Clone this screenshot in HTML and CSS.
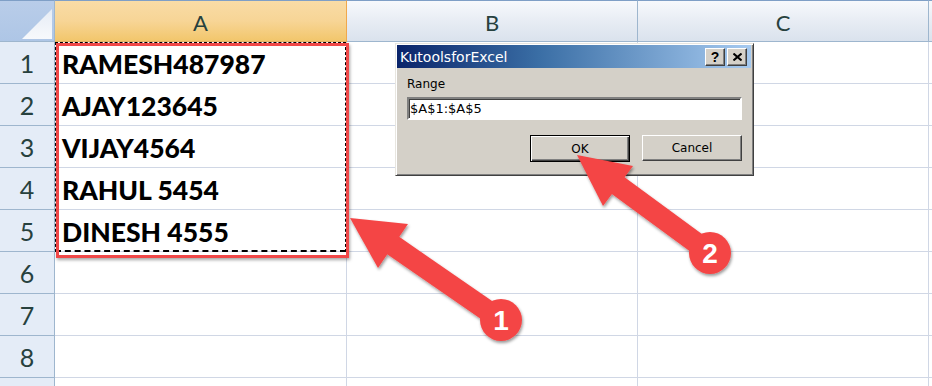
FILE: index.html
```html
<!DOCTYPE html>
<html>
<head>
<meta charset="utf-8">
<link rel="stylesheet" href="styles.css">
</head>
<body>
<div class="page">
  <div class="sheet">
    <div class="corner"><div class="tri"></div></div>
    <div class="colhdr active">A</div>
    <div class="colhdr">B</div>
    <div class="colhdr">C</div>
    <div class="colhdr last"></div>

    <div class="rowhdr">1</div><div class="cell data">RAMESH487987</div><div class="cell"></div><div class="cell"></div><div class="cell last"></div>
    <div class="rowhdr">2</div><div class="cell data">AJAY123645</div><div class="cell"></div><div class="cell"></div><div class="cell last"></div>
    <div class="rowhdr">3</div><div class="cell data">VIJAY4564</div><div class="cell"></div><div class="cell"></div><div class="cell last"></div>
    <div class="rowhdr">4</div><div class="cell data">RAHUL 5454</div><div class="cell"></div><div class="cell"></div><div class="cell last"></div>
    <div class="rowhdr">5</div><div class="cell data">DINESH 4555</div><div class="cell"></div><div class="cell"></div><div class="cell last"></div>
    <div class="rowhdr">6</div><div class="cell"></div><div class="cell"></div><div class="cell"></div><div class="cell last"></div>
    <div class="rowhdr">7</div><div class="cell"></div><div class="cell"></div><div class="cell"></div><div class="cell last"></div>
    <div class="rowhdr">8</div><div class="cell"></div><div class="cell"></div><div class="cell"></div><div class="cell last"></div>
    <div class="rowhdr"></div><div class="cell"></div><div class="cell"></div><div class="cell"></div><div class="cell last"></div>
  </div>

  <div class="ants"></div>
  <div class="redbox"></div>

  <div class="dialog">
    <div class="titlebar">
      <span class="title">KutoolsforExcel</span>
      <div class="winbtns">
        <div class="winbtn help">?</div>
        <div class="winbtn">
          <svg width="9" height="8" viewBox="0 0 9 8"><path d="M0.5 0.5 L8.5 7.5 M8.5 0.5 L0.5 7.5" stroke="#000" stroke-width="2" fill="none"/></svg>
        </div>
      </div>
    </div>
    <div class="dbody">
      <div class="label">Range</div>
      <div class="input">$A$1:$A$5</div>
      <div class="buttons">
        <div class="btn default"><span>OK</span></div>
        <div class="btn"><span>Cancel</span></div>
      </div>
    </div>
  </div>

  <svg class="arrows" width="932" height="386" viewBox="0 0 932 386">
    <defs>
      <filter id="sh" x="-20%" y="-20%" width="140%" height="140%">
        <feDropShadow dx="1" dy="2" stdDeviation="1.6" flood-color="#000" flood-opacity="0.4"/>
      </filter>
    </defs>
    <g filter="url(#sh)" fill="#f44545">
      <line x1="501" y1="320" x2="391" y2="244" stroke="#f44545" stroke-width="21"/>
      <polygon points="350,218 408,224 378,268"/>
      <circle cx="501" cy="320" r="21"/>
      <line x1="710" y1="253" x2="616" y2="184" stroke="#f44545" stroke-width="21"/>
      <polygon points="577,155 633,166 603,206"/>
      <circle cx="710" cy="253" r="21"/>
    </g>
    <text x="501" y="330" class="num">1</text>
    <text x="710" y="263" class="num">2</text>
  </svg>
</div>
</body>
</html>
```

FILE: styles.css
```css
html, body {
  margin: 0;
  padding: 0;
  background: #ffffff;
}
.page {
  position: relative;
  width: 932px;
  height: 386px;
  overflow: hidden;
}
.sheet {
  display: grid;
  grid-template-columns: 55px 292px 291px 291px 1fr;
  grid-template-rows: repeat(10, 42px);
  font-family: Lato, "Open Sans", sans-serif;
}
.sheet > div {
  box-sizing: border-box;
}
.corner {
  position: relative;
  background: linear-gradient(#b9cde9, #aec6e6);
  border-top: 1px solid #7f9fc6;
  border-right: 1px solid #9eb6ce;
  border-bottom: 1px solid #9eb6ce;
}
.corner .tri {
  position: absolute;
  right: 2px;
  bottom: 2px;
  width: 30px;
  height: 30px;
  background: linear-gradient(to bottom, #e6ecf5, #f7f9fc);
  clip-path: polygon(100% 0, 100% 100%, 0 100%);
}
.colhdr {
  display: flex;
  align-items: center;
  justify-content: center;
  font-size: 22px;
  color: #27413e;
  background: linear-gradient(#f7f9fc, #e6ebf3 55%, #dae2ed);
  border-top: 1px solid #7f9fc6;
  border-right: 1px solid #9eb6ce;
  border-bottom: 1px solid #9eb6ce;
  padding-top: 2px;
}
.colhdr.active {
  background: linear-gradient(#f9dca6, #f7d596 50%, #f2c66b);
  border-right-color: #f0a84c;
  border-bottom-color: #e2b266;
}
.colhdr.last, .cell.last {
  border-right: none;
}
.rowhdr {
  display: flex;
  align-items: center;
  justify-content: center;
  font-size: 25px;
  color: #27413e;
  background: #e4ecf7;
  border-right: 1px solid #9eb6ce;
  border-bottom: 1px solid #9eb6ce;
  padding-top: 1px;
}
.cell {
  border-right: 1px solid #d0d7e5;
  border-bottom: 1px solid #d0d7e5;
}
.cell.data {
  display: flex;
  align-items: center;
  padding-left: 7px;
  padding-top: 2px;
  font-weight: 900;
  font-size: 26.5px;
  color: #000;
}
.ants {
  position: absolute;
  left: 55px;
  top: 42px;
  width: 291px;
  height: 210px;
  box-sizing: border-box;
  border: 1px dashed #000;
  border-bottom-width: 2px;
}
.redbox {
  position: absolute;
  left: 56px;
  top: 43px;
  width: 293px;
  height: 215px;
  box-sizing: border-box;
  border: 3px solid #f04848;
  box-shadow: 1px 2px 3px rgba(0, 0, 0, 0.35);
}
.dialog {
  position: absolute;
  left: 395px;
  top: 43px;
  width: 359px;
  height: 133px;
  box-sizing: border-box;
  background: #d4d0c8;
  border: 1px solid;
  border-color: #e8e6e0 #404040 #404040 #e8e6e0;
  box-shadow: inset 1px 1px #ffffff, inset -1px -1px #808080;
  padding: 1px 2px 2px 1px;
  font-family: "DejaVu Sans", Verdana, sans-serif;
}
.titlebar {
  height: 23px;
  display: flex;
  align-items: center;
  justify-content: space-between;
  background: linear-gradient(to right, #0a246a, #3a6ea5 40%, #a6caf0);
  padding-left: 3px;
  padding-right: 4px;
}
.title {
  color: #fff;
  font-family: "DejaVu Sans", Verdana, sans-serif;
  font-size: 14px;
}
.winbtns {
  display: flex;
  gap: 2px;
}
.winbtn {
  width: 20px;
  height: 18px;
  box-sizing: border-box;
  background: #d4d0c8;
  border: 1px solid;
  border-color: #ffffff #404040 #404040 #ffffff;
  box-shadow: inset -1px -1px #808080;
  display: flex;
  align-items: center;
  justify-content: center;
}
.winbtn.help {
  font-family: "Liberation Sans", Arial, sans-serif;
  font-weight: 700;
  font-size: 14px;
  color: #000;
}
.dbody {
  padding: 9px 9px 0 10px;
}
.label {
  font-size: 12px;
  color: #000;
  line-height: 14px;
}
.input {
  margin-top: 6px;
  height: 23px;
  box-sizing: border-box;
  background: #fff;
  border: 2px solid;
  border-color: #808080 #ffffff #ffffff #808080;
  box-shadow: inset 1px 1px #404040;
  font-size: 13px;
  line-height: 19px;
  padding-left: 1px;
  color: #000;
}
.buttons {
  display: flex;
  justify-content: flex-end;
  gap: 12px;
  margin-top: 15px;
}
.btn {
  width: 100px;
  height: 26px;
  box-sizing: border-box;
  background: #d4d0c8;
  border: 1px solid;
  border-color: #ffffff #404040 #404040 #ffffff;
  box-shadow: inset -1px -1px #808080;
  display: flex;
  align-items: center;
  justify-content: center;
  font-size: 12px;
  color: #000;
}
.btn.default {
  height: 27px;
  border: 1px solid #000;
  box-shadow: inset 1px 1px #ffffff, inset -1px -1px #404040, inset -2px -2px #808080;
}
.arrows {
  position: absolute;
  left: 0;
  top: 0;
}
.num {
  fill: #ffffff;
  font-family: "Liberation Sans", Arial, sans-serif;
  font-weight: 700;
  font-size: 28px;
  text-anchor: middle;
}
```
